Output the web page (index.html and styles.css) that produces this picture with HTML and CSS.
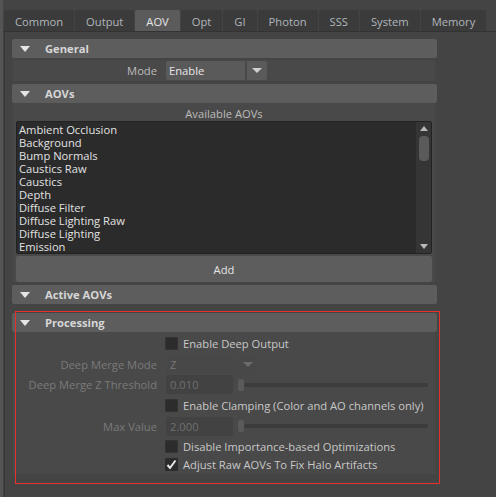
FILE: index.html
```html
<!DOCTYPE html>
<html>
<head>
<meta charset="utf-8">
<link rel="stylesheet" href="styles.css">
</head>
<body>
<div class="window">
  <div class="tabs">
    <div class="tab">Common</div>
    <div class="tab">Output</div>
    <div class="tab active">AOV</div>
    <div class="tab">Opt</div>
    <div class="tab">GI</div>
    <div class="tab">Photon</div>
    <div class="tab">SSS</div>
    <div class="tab">System</div>
    <div class="tab">Memory</div>
  </div>
  <div class="panel">
    <div class="frame">
      <div class="header"><span class="tri"></span>General</div>
      <div class="body general-body">
        <div class="row">
          <div class="label">Mode</div>
          <div class="combo">
            <div class="combo-field">Enable</div>
            <div class="combo-btn"><span class="dtri"></span></div>
          </div>
        </div>
      </div>
    </div>

    <div class="frame">
      <div class="header"><span class="tri"></span>AOVs</div>
      <div class="body aov-body">
        <div class="caption">Available AOVs</div>
        <div class="list">
          <div class="items">
            <div>Ambient Occlusion</div>
            <div>Background</div>
            <div>Bump Normals</div>
            <div>Caustics Raw</div>
            <div>Caustics</div>
            <div>Depth</div>
            <div>Diffuse Filter</div>
            <div>Diffuse Lighting Raw</div>
            <div>Diffuse Lighting</div>
            <div>Emission</div>
          </div>
          <div class="scrollbar">
            <span class="sb-up"></span>
            <span class="sb-thumb"></span>
            <span class="sb-space"></span>
            <span class="sb-down"></span>
          </div>
        </div>
        <div class="add">Add</div>
      </div>
    </div>

    <div class="frame">
      <div class="header"><span class="tri"></span>Active AOVs</div>
    </div>

    <div class="frame processing">
      <div class="header"><span class="tri"></span>Processing</div>
      <div class="body proc-body">
        <div class="prow h21">
          <div class="label"></div>
          <div class="check-wrap"><span class="check"></span><span class="ctext">Enable Deep Output</span></div>
        </div>
        <div class="prow h20">
          <div class="label dis">Deep Merge Mode</div>
          <div class="combo dis-combo">
            <div class="combo-field">Z</div>
            <div class="combo-btn"><span class="dtri"></span></div>
          </div>
        </div>
        <div class="prow h21">
          <div class="label dis">Deep Merge Z Threshold</div>
          <div class="slider-wrap">
            <div class="numfield">0.010</div>
            <span class="handle"></span>
            <span class="track"></span>
          </div>
        </div>
        <div class="prow h21">
          <div class="label"></div>
          <div class="check-wrap"><span class="check"></span><span class="ctext">Enable Clamping (Color and AO channels only)</span></div>
        </div>
        <div class="prow h20">
          <div class="label dis">Max Value</div>
          <div class="slider-wrap">
            <div class="numfield">2.000</div>
            <span class="handle"></span>
            <span class="track"></span>
          </div>
        </div>
        <div class="prow h20">
          <div class="label"></div>
          <div class="check-wrap"><span class="check"></span><span class="ctext">Disable Importance-based Optimizations</span></div>
        </div>
        <div class="prow h17">
          <div class="label"></div>
          <div class="check-wrap"><span class="check checked"><svg viewBox="0 0 13 13" width="13" height="13"><path d="M2.5 7 L5 10 L10.5 2.5" fill="none" stroke="#e8e8e8" stroke-width="2"/></svg></span><span class="ctext">Adjust Raw AOVs To Fix Halo Artifacts</span></div>
        </div>
      </div>
      <div class="redbox"></div>
    </div>
  </div>
</div>
</body>
</html>
```

FILE: styles.css
```css
html, body {
  margin: 0;
  padding: 0;
  background: #444444;
  width: 496px;
  height: 497px;
  overflow: hidden;
}
body {
  font-family: "Open Sans", "Noto Sans", sans-serif;
  font-size: 11.2px;
  color: #cccccc;
}
.window {
  border-left: 3px solid #545454;
  height: 497px;
  box-sizing: border-box;
}
.tabs {
  display: flex;
  gap: 1px;
  padding-top: 10px;
  padding-left: 1px;
  height: 21px;
  border-bottom: 1px solid #333333;
}
.tab {
  background: #3b3b3b;
  color: #b0b6bb;
  height: 21px;
  line-height: 23px;
  padding: 0 11px;
  border-radius: 2px 2px 0 0;
}
.tab.active {
  background: #5b5b5b;
  color: #e6e6e6;
}
.panel {
  margin-left: 1px;
  border-left: 1px solid #363636;
  padding: 7px 0 0 7px;
  width: 425px;
  display: flex;
  flex-direction: column;
  height: 460px;
}
.frame {
  position: relative;
  margin-bottom: 3px;
}
.header {
  height: 19px;
  background: #5d5d5d;
  border-radius: 2px;
  display: flex;
  align-items: center;
  font-weight: bold;
  color: #d6d6d6;
}
.tri {
  width: 0;
  height: 0;
  border-left: 5px solid transparent;
  border-right: 5px solid transparent;
  border-top: 6px solid #e4e4e4;
  margin-left: 8px;
  margin-right: 15px;
}
.body {
  background: #494949;
  margin: 0 2px 0 1px;
}
.general-body {
  margin-top: 2px;
}
.row {
  display: flex;
  align-items: center;
  height: 21px;
  gap: 9px;
}
.label {
  width: 144px;
  flex: none;
  text-align: right;
  color: #bcbcbc;
  white-space: nowrap;
}
.label.dis { color: #7a7a7a; }
.combo {
  display: flex;
  gap: 2px;
  height: 19px;
}
.combo-field {
  width: 76px;
  background: #5a5a5a;
  color: #e6e6e6;
  padding-left: 3px;
  line-height: 19px;
  border-radius: 2px 0 0 2px;
}
.combo-btn {
  width: 20px;
  background: #5a5a5a;
  display: flex;
  align-items: center;
  justify-content: center;
  border-radius: 0 2px 2px 0;
}
.dtri {
  width: 0;
  height: 0;
  border-left: 5px solid transparent;
  border-right: 5px solid transparent;
  border-top: 5px solid #cfcfcf;
}
.aov-body {
  padding: 0 3px 0 3px;
  display: flex;
  flex-direction: column;
}
.caption {
  height: 18px;
  line-height: 21px;
  text-align: center;
  color: #bcbcbc;
}
.list {
  height: 131px;
  background: #2b2b2b;
  border: 1px solid #222222;
  display: flex;
  border-radius: 2px;
}
.items {
  flex: 1;
  padding: 1px 0 0 2px;
  color: #e2e2e2;
  line-height: 13px;
  overflow: hidden;
}
.scrollbar {
  width: 15px;
  background: #353535;
  display: flex;
  flex-direction: column;
  align-items: center;
  padding-top: 4px;
}
.sb-up {
  width: 0; height: 0;
  border-left: 4px solid transparent;
  border-right: 4px solid transparent;
  border-bottom: 5px solid #b8b8b8;
}
.sb-thumb {
  width: 10px;
  height: 25px;
  background: #5a5a5a;
  border-radius: 4px;
  margin-top: 5px;
}
.sb-space { flex: 1; }
.sb-down {
  width: 0; height: 0;
  border-left: 4px solid transparent;
  border-right: 4px solid transparent;
  border-top: 5px solid #b8b8b8;
  margin-bottom: 4px;
}
.add {
  margin-top: 2px;
  height: 26px;
  line-height: 27px;
  background: #5d5d5d;
  text-align: center;
  color: #e4e4e4;
  border-radius: 2px;
}
.processing {
  margin-top: 6px;
}
.proc-body {
  padding-top: 1px;
  height: 141px;
}
.prow {
  display: flex;
  align-items: center;
  gap: 9px;
}
.h21 { height: 21px; }
.h20 { height: 20px; }
.h17 { height: 17px; }
.check-wrap {
  display: flex;
  align-items: center;
  margin-left: -1px;
}
.check {
  width: 13px;
  height: 13px;
  box-sizing: border-box;
  background: #2c2c2c;
  border: 1px solid #333333;
  border-radius: 1px;
  margin-right: 5px;
  display: flex;
}
.check.checked { border: none; background: #2b2b2b; }
.ctext { color: #c8c8c8; white-space: nowrap; }
.dis-combo .combo-field {
  width: 68px;
  background: #484848;
  color: #777777;
  padding-left: 4px;
}
.dis-combo .combo-btn {
  width: 16px;
  background: #484848;
}
.dis-combo .dtri { border-top-color: #6c6c6c; }
.slider-wrap {
  display: flex;
  align-items: center;
  height: 19px;
}
.numfield {
  width: 63px;
  height: 19px;
  line-height: 19px;
  background: #424242;
  color: #707070;
  padding-left: 4px;
  border-radius: 2px;
}
.handle {
  width: 6px;
  height: 12px;
  background: #5a5a5a;
  border-radius: 2px;
  margin-left: 5px;
}
.track {
  width: 184px;
  height: 4px;
  background: #3c3c3c;
  border-radius: 2px;
}
.redbox {
  position: absolute;
  left: 3px;
  top: -2px;
  width: 425px;
  height: 173px;
  box-sizing: border-box;
  border: 1px solid #e8302f;
  pointer-events: none;
}
```
